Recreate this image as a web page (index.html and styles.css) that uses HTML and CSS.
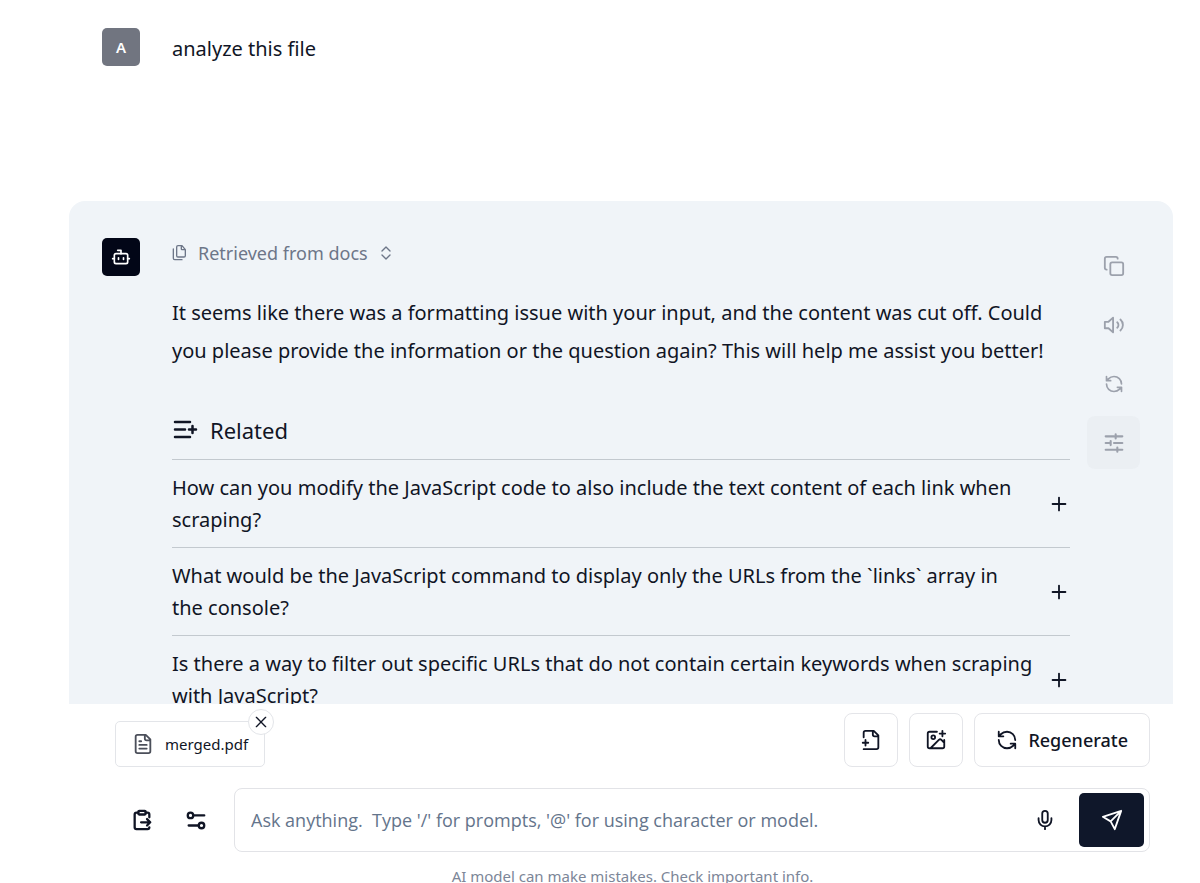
FILE: index.html
```html
<!DOCTYPE html>
<html lang="en">
<head>
<meta charset="utf-8">
<meta name="viewport" content="width=device-width, initial-scale=1">
<title>Chat</title>
<link rel="stylesheet" href="styles.css">
</head>
<body>
<svg class="sprite" aria-hidden="true">
  <symbol id="refresh" viewBox="0 0 24 24"><path d="M21 12a9 9 0 0 0-9-9 9.75 9.75 0 0 0-6.74 2.74L3 8M3 3v5h5M3 12a9 9 0 0 0 9 9 9.75 9.75 0 0 0 6.74-2.74L21 16M16 16h5v5"/></symbol>
  <symbol id="plus" viewBox="0 0 24 24"><path d="M5 12h14M12 5v14"/></symbol>
</svg>
<div class="app">
  <main class="chat">
    <article class="message">
      <div class="avatar avatar-user">A</div>
      <p class="user-text">analyze this file</p>
    </article>
    <article class="message message-bot">
      <div class="avatar avatar-bot">
        <svg class="icon icon-md" viewBox="0 0 24 24"><path d="M12 8V4H8M2 14h2M20 14h2M15 13v2M9 13v2"/><rect x="4" y="8" width="16" height="12" rx="2"/></svg>
      </div>
      <div class="content">
        <button class="source" type="button">
          <svg class="icon icon-xs" viewBox="0 0 24 24"><path d="M20 7v9a2 2 0 0 1-2 2H9a2 2 0 0 1-2-2V3a2 2 0 0 1 2-2h6zM14 1v5a1 1 0 0 0 1 1h5M2 6v14a2 2 0 0 0 2 2h11"/></svg>
          <span>Retrieved from docs</span>
          <svg class="icon icon-xs" viewBox="0 0 24 24"><path d="m6 15 6 6 6-6M6 9l6-6 6 6"/></svg>
        </button>
        <p class="answer">It seems like there was a formatting issue with your input, and the content was cut off. Could you please provide the information or the question again? This will help me assist you better!</p>
        <section>
          <h2 class="related-title">
            <svg class="icon icon-lg heavy" viewBox="0 0 24 24"><path d="M2 4h15M2 11.500h10M2 19h15M16 11.500h7M19.500 8v7"/></svg>
            Related
          </h2>
          <ul class="related">
            <li><button type="button"><span>How can you modify the JavaScript code to also include the text content of each link when scraping?</span><svg class="icon icon-sm"><use href="#plus"/></svg></button></li>
            <li><button type="button"><span>What would be the JavaScript command to display only the URLs from the `links` array in<br>the console?</span><svg class="icon icon-sm"><use href="#plus"/></svg></button></li>
            <li><button type="button"><span>Is there a way to filter out specific URLs that do not contain certain keywords when scraping with JavaScript?</span><svg class="icon icon-sm"><use href="#plus"/></svg></button></li>
          </ul>
        </section>
      </div>
      <div class="actions">
        <button type="button" aria-label="Copy"><svg class="icon icon-sm" viewBox="0 0 24 24"><rect x="8" y="8" width="14" height="14" rx="2"/><path d="M4 16a2 2 0 0 1-2-2V4a2 2 0 0 1 2-2h10a2 2 0 0 1 2 2"/></svg></button>
        <button type="button" aria-label="Read aloud"><svg class="icon icon-sm" viewBox="0 0 24 24"><path d="M11 4 6 8.500H2v7h4l5 4.500zM15.500 9a4 4 0 0 1 0 6M19 6a8 8 0 0 1 0 12"/></svg></button>
        <button type="button" aria-label="Regenerate answer"><svg class="icon icon-md"><use href="#refresh"/></svg></button>
        <button class="active" type="button" aria-label="Settings"><svg class="icon icon-md heavy" viewBox="0 0 24 24"><path d="M2 4h10M14 1.500v5M14 4h8M2 12h5M8 9.500v5M12 12h10M2 20h13M16 17.500v5M16 20h6"/></svg></button>
      </div>
    </article>
  </main>
  <footer class="composer">
    <div class="toolbar">
      <div class="file">
        <svg class="icon icon-sm" viewBox="0 0 24 24"><path d="M15 2H6a2 2 0 0 0-2 2v16a2 2 0 0 0 2 2h12a2 2 0 0 0 2-2V7zM14 2v4a2 2 0 0 0 2 2h4M10 9H8M16 13H8M16 17H8"/></svg>
        <span>merged.pdf</span>
        <button class="remove" type="button" aria-label="Remove file"><svg class="icon icon-xs" viewBox="0 0 24 24"><path d="M19 5 5 19M5 5l14 14"/></svg></button>
      </div>
      <div class="tools">
        <button class="tool" type="button" aria-label="Add file"><svg class="icon icon-sm" viewBox="0 0 24 24"><path d="M4 9V4a2 2 0 0 1 2-2h9l5 5v13a2 2 0 0 1-2 2H4M14 2v4a2 2 0 0 0 2 2h4M3 15h6M6 12v6"/></svg></button>
        <button class="tool" type="button" aria-label="Add image"><svg class="icon icon-sm" viewBox="0 0 24 24"><path d="M13 3H5a2 2 0 0 0-2 2v14a2 2 0 0 0 2 2h14a2 2 0 0 0 2-2v-7M16 5h6M19 2v6M21 15l-3.090-3.090a2 2 0 0 0-2.820 0L6 21"/><circle cx="9" cy="9" r="2"/></svg></button>
        <button class="tool regenerate" type="button"><svg class="icon icon-sm"><use href="#refresh"/></svg>Regenerate</button>
      </div>
    </div>
    <form class="entry">
      <button class="plain" type="button" aria-label="Prompts"><svg class="icon icon-sm heavy" viewBox="0 0 24 24"><rect x="8" y="2" width="8" height="4" rx="1"/><path d="M16 4h2a2 2 0 0 1 2 2v3M8 4H6a2 2 0 0 0-2 2v14a2 2 0 0 0 2 2h12a2 2 0 0 0 2-2M11 14.500h10M17.500 11l3.500 3.500-3.500 3.500"/></svg></button>
      <button class="plain" type="button" aria-label="Options"><svg class="icon icon-sm heavy" viewBox="0 0 24 24"><path d="M9 7h12M4 18h11"/><circle cx="6" cy="7" r="3"/><circle cx="18" cy="18" r="3"/></svg></button>
      <div class="field">
        <input type="text" aria-label="Message" placeholder="Ask anything.&nbsp; Type '/' for prompts, '@' for using character or model.">
        <button class="plain" type="button" aria-label="Voice input"><svg class="icon icon-sm" viewBox="0 0 24 24"><rect x="9" y="2" width="6" height="13" rx="3"/><path d="M19 10v2a7 7 0 0 1-14 0v-2M12 19v3"/></svg></button>
        <button class="send" type="submit" aria-label="Send"><svg class="icon icon-sm" viewBox="0 0 24 24"><path d="M22 2 2 8.500l8.500 5L15 22zM22 2 10.500 13.500"/></svg></button>
      </div>
    </form>
    <p class="note">AI model can make mistakes. Check important info.</p>
  </footer>
</div>
</body>
</html>
```
FILE: styles.css
```css
* { box-sizing: border-box; }
body { margin: 0; background: #fff; color: #101525; font-family: "Noto Sans", "Open Sans", sans-serif; font-size: 20px; line-height: 32px; }
p, h2, ul { margin: 0; padding: 0; font-weight: 400; }
button, input { font: inherit; color: inherit; border: 0; padding: 0; background: none; }
button { cursor: pointer; }
.sprite { display: none; }
.app { display: flex; flex-direction: column; height: 100vh; overflow: hidden; padding: 0 27px 0 69px; }

.icon { flex: none; fill: none; stroke: currentColor; stroke-width: 2; stroke-linecap: round; stroke-linejoin: round; }
.icon-xs { width: 16px; height: 16px; }
.icon-md { width: 20px; height: 20px; }
.icon-sm { width: 22px; height: 22px; }
.icon-lg { width: 26px; height: 24px; }
.heavy { stroke-width: 2.5; }

.chat { flex: 1; min-height: 0; overflow: hidden; display: flex; flex-direction: column; gap: 96px; }
.message { flex: none; display: flex; align-items: flex-start; padding: 28px 33px 38px; }
.message-bot { padding-top: 37px; border-radius: 16px; background: #f0f4f8; }
.avatar { flex: none; width: 38px; height: 38px; margin-right: 32px; border-radius: 5px; display: flex; align-items: center; justify-content: center; color: #fff; }
.avatar-user { background: #717580; font-size: 15px; font-weight: 600; }
.avatar-bot { background: #020617; }
.user-text { padding: 5px 0 2px; }
.content { flex: 1; min-width: 0; }

.source { display: flex; align-items: center; gap: 10px; color: #6d7688; font-size: 18px; line-height: 30px; }
.answer { padding: 26px 0 44px; line-height: 38px; }
.related-title { display: flex; align-items: center; gap: 12px; padding-bottom: 13px; border-bottom: 1px solid #c3c9cf; font-size: 22px; line-height: 32px; }
.related { list-style: none; }
.related li + li { border-top: 1px solid #c3c9cf; }
.related button { width: 100%; display: flex; align-items: center; justify-content: space-between; padding: 12px 0 11px; text-align: left; }

.actions { display: flex; flex-direction: column; gap: 6px; margin: 1px 0 0 17px; color: #9ca1ac; }
.actions button { width: 53px; height: 53px; display: flex; align-items: center; justify-content: center; border-radius: 8px; }
.actions .active { background: #ebeff3; }

.composer { flex: none; padding: 9px 23px 0 46px; }
.toolbar { display: flex; align-items: flex-end; justify-content: space-between; }
.file { position: relative; display: flex; align-items: center; gap: 11px; padding: 6px 16px; border: 1px solid #e3e5e9; border-radius: 5px; font-size: 15px; }
.file .icon-sm { color: #4b4f5a; }
.remove { position: absolute; top: -13px; right: -10px; width: 26px; height: 26px; display: flex; align-items: center; justify-content: center; border: 1px solid #e3e5e9; border-radius: 50%; background: #fff; }
.tools { display: flex; gap: 11px; }
.tool { height: 54px; min-width: 54px; display: flex; align-items: center; justify-content: center; gap: 10px; border: 1px solid #e4e5e9; border-radius: 8px; }
.regenerate { padding: 0 21px; font-size: 18px; font-weight: 500; }

.entry { display: flex; align-items: center; margin-top: 21px; }
.plain { width: 54px; height: 54px; flex: none; display: flex; align-items: center; justify-content: center; }
.field { flex: 1; min-width: 0; display: flex; align-items: center; margin-left: 11px; padding: 4px 5px 4px 16px; border: 1px solid #e2e3e7; border-radius: 8px; }
.field input { flex: 1; min-width: 0; font-family: "Open Sans", "Noto Sans", sans-serif; font-size: 18px; outline: 0; }
.field input::placeholder { color: #64748b; opacity: 1; }
.send { width: 65px; height: 54px; margin-left: 7px; display: flex; align-items: center; justify-content: center; border-radius: 5px; background: #0f172a; color: #fff; }
.note { height: 31px; padding-top: 8px; color: #7c8698; font-size: 15px; text-align: center; }
```
